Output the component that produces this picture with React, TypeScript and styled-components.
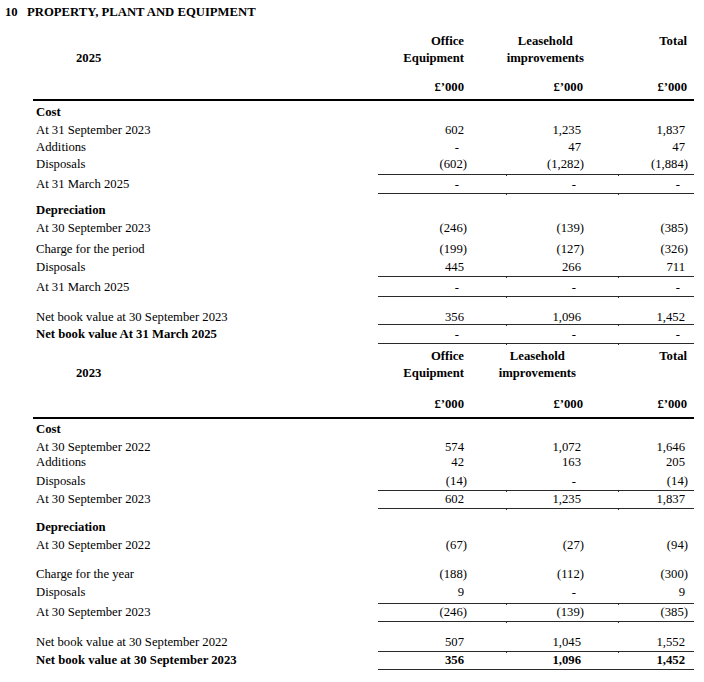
import React from "react";
import styled, { createGlobalStyle } from "styled-components";

const Global = createGlobalStyle`
  html, body { margin: 0; padding: 0; background: #fff; }
  body { font-family: "Liberation Serif", "Times New Roman", serif; color: #000; }
`;

const COLS = "345px 129px 112px 75px";
const NUM_PR = [43, 38, 9];

const Page = styled.div`
  width: 704px;
  padding-left: 5px;
  box-sizing: border-box;
  font-size: 12.7px;
`;

const Title = styled.h2`
  margin: 0;
  display: flex;
  font-size: 12.7px;
  font-weight: bold;
  line-height: 24px;
`;

const TitleNum = styled.span`
  width: 22px;
`;

const Table = styled.section`
  margin-left: 28px;
  width: 661px;
`;

const HeaderRow = styled.div<{ $h: number }>`
  display: grid;
  grid-template-columns: ${COLS};
  height: ${(p) => p.$h}px;
  border-bottom: 2px solid #000;
`;

const YearCell = styled.div<{ $pt: number }>`
  padding-top: ${(p) => p.$pt + 17}px;
  padding-left: 43px;
  line-height: 17px;
  font-weight: bold;
`;

const HeaderCell = styled.div<{ $pt: number; $pb: number }>`
  display: flex;
  flex-direction: column;
  justify-content: space-between;
  align-items: flex-end;
  padding-top: ${(p) => p.$pt}px;
  padding-bottom: ${(p) => p.$pb}px;
  font-weight: bold;
`;

const ColTitle = styled.div<{ $mr: number; $align: string }>`
  line-height: 17px;
  text-align: ${(p) => p.$align};
  margin-right: ${(p) => p.$mr}px;
`;

const Currency = styled.div<{ $mr: number }>`
  line-height: 17px;
  margin-right: ${(p) => p.$mr}px;
`;

const Row = styled.div<{ $mt: number }>`
  display: grid;
  grid-template-columns: ${COLS};
  margin-top: ${(p) => p.$mt}px;
`;

const Label = styled.div<{ $bold?: boolean; $h: number }>`
  padding-left: 3px;
  height: ${(p) => p.$h}px;
  line-height: 17px;
  white-space: nowrap;
  font-weight: ${(p) => (p.$bold ? "bold" : "normal")};
`;

const NumCell = styled.div<{
  $h: number;
  $pb: number;
  $pr: number;
  $rule?: boolean;
  $tick?: boolean;
  $bold?: boolean;
}>`
  position: relative;
  height: ${(p) => p.$h}px;
  padding-bottom: ${(p) => p.$pb}px;
  padding-right: ${(p) => p.$pr}px;
  line-height: 17px;
  text-align: right;
  white-space: nowrap;
  font-weight: ${(p) => (p.$bold ? "bold" : "normal")};
  border-bottom: ${(p) => (p.$rule ? "1px solid #2a2a2a" : "none")};
  &::after {
    content: "";
    display: ${(p) => (p.$rule && p.$tick ? "block" : "none")};
    position: absolute;
    right: 0;
    bottom: -2px;
    width: 1px;
    height: 2px;
    background: #2a2a2a;
  }
`;

const Value = styled.span<{ $shift: number }>`
  display: inline-block;
  margin-right: ${(p) => p.$shift}px;
`;

type RowData = {
  label: string;
  vals?: string[];
  mt: number;
  h?: number;
  pb?: number;
  rule?: boolean;
  boldLabel?: boolean;
  boldNums?: boolean;
};

type HeaderData = {
  year: string;
  h: number;
  pt: number;
  pb: number;
  leaseMr: number;
};

const shiftFor = (v: string) => (v.startsWith("(") ? -3 : v === "-" ? 5 : 0);

function Header({ data }: { data: HeaderData }) {
  return (
    <HeaderRow $h={data.h}>
      <YearCell $pt={data.pt}>{data.year}</YearCell>
      <HeaderCell $pt={data.pt} $pb={data.pb}>
        <ColTitle $mr={43} $align="right">
          Office
          <br />
          Equipment
        </ColTitle>
        <Currency $mr={43}>£’000</Currency>
      </HeaderCell>
      <HeaderCell $pt={data.pt} $pb={data.pb}>
        <ColTitle $mr={data.leaseMr} $align="center">
          Leasehold
          <br />
          improvements
        </ColTitle>
        <Currency $mr={36}>£’000</Currency>
      </HeaderCell>
      <HeaderCell $pt={data.pt} $pb={data.pb}>
        <ColTitle $mr={7} $align="right">
          Total
        </ColTitle>
        <Currency $mr={7}>£’000</Currency>
      </HeaderCell>
    </HeaderRow>
  );
}

function Line({ r }: { r: RowData }) {
  const h = r.h ?? 17;
  const pb = r.pb ?? 0;
  const vals = r.vals ?? ["", "", ""];
  return (
    <Row $mt={r.mt}>
      <Label $bold={r.boldLabel} $h={h}>
        {r.label}
      </Label>
      {vals.map((v, i) => (
        <NumCell
          key={i}
          $h={h}
          $pb={pb}
          $pr={NUM_PR[i]}
          $rule={r.rule}
          $tick={i < 2}
          $bold={r.boldNums}
        >
          {v && <Value $shift={shiftFor(v)}>{v}</Value>}
        </NumCell>
      ))}
    </Row>
  );
}

const table2025: RowData[] = [
  { label: "Cost", mt: 3, boldLabel: true },
  { label: "At 31 September 2023", vals: ["602", "1,235", "1,837"], mt: 1 },
  { label: "Additions", vals: ["-", "47", "47"], mt: 0 },
  { label: "Disposals", vals: ["(602)", "(1,282)", "(1,884)"], mt: 0, pb: 1, rule: true },
  { label: "At 31 March 2025", vals: ["-", "-", "-"], mt: 1, rule: true },
  { label: "Depreciation", mt: 8, boldLabel: true },
  { label: "At 30 September 2023", vals: ["(246)", "(139)", "(385)"], mt: 1 },
  { label: "Charge for the period", vals: ["(199)", "(127)", "(326)"], mt: 4 },
  { label: "Disposals", vals: ["445", "266", "711"], mt: 1, rule: true },
  { label: "At 31 March 2025", vals: ["-", "-", "-"], mt: 2, rule: true },
  { label: "Net book value at 30 September 2023", vals: ["356", "1,096", "1,452"], mt: 12, h: 15, rule: true },
  { label: "Net book value At 31 March 2025", vals: ["-", "-", "-"], mt: 1, rule: true, boldLabel: true },
];

const table2023: RowData[] = [
  { label: "Cost", mt: 2, boldLabel: true },
  { label: "At 30 September 2022", vals: ["574", "1,072", "1,646"], mt: 1, h: 15 },
  { label: "Additions", vals: ["42", "163", "205"], mt: 0 },
  { label: "Disposals", vals: ["(14)", "-", "(14)"], mt: 2, rule: true },
  { label: "At 30 September 2023", vals: ["602", "1,235", "1,837"], mt: 0, rule: true },
  { label: "Depreciation", mt: 10, boldLabel: true },
  { label: "At 30 September 2022", vals: ["(67)", "(27)", "(94)"], mt: 1 },
  { label: "Charge for the year", vals: ["(188)", "(112)", "(300)"], mt: 12 },
  { label: "Disposals", vals: ["9", "-", "9"], mt: 1, pb: 2, rule: true },
  { label: "At 30 September 2023", vals: ["(246)", "(139)", "(385)"], mt: 0, rule: true },
  { label: "Net book value at 30 September 2022", vals: ["507", "1,045", "1,552"], mt: 12, rule: true },
  {
    label: "Net book value at 30 September 2023",
    vals: ["356", "1,096", "1,452"],
    mt: 0,
    rule: true,
    boldLabel: true,
    boldNums: true,
  },
];

export default function App() {
  return (
    <Page>
      <Global />
      <Title>
        <TitleNum>10</TitleNum>
        <span>PROPERTY, PLANT AND EQUIPMENT</span>
      </Title>
      <Table>
        <Header data={{ year: "2025", h: 75, pt: 9, pb: 3, leaseMr: 35 }} />
        {table2025.map((r, i) => (
          <Line key={i} r={r} />
        ))}
        <Header data={{ year: "2023", h: 73, pt: 4, pb: 4, leaseMr: 43 }} />
        {table2023.map((r, i) => (
          <Line key={i} r={r} />
        ))}
      </Table>
    </Page>
  );
}
